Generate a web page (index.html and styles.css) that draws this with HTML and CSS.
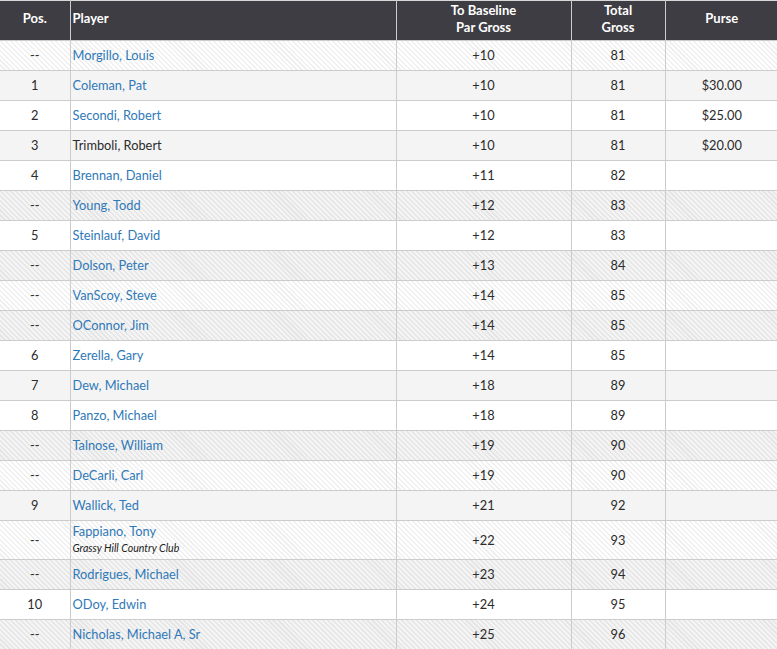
FILE: index.html
```html
<!DOCTYPE html>
<html>
<head>
<meta charset="utf-8">
<link rel="stylesheet" href="styles.css">
</head>
<body>
<table class="board">
  <colgroup>
    <col class="c-pos"><col class="c-player"><col class="c-par"><col class="c-total"><col class="c-purse">
  </colgroup>
  <thead>
    <tr>
      <th>Pos.</th>
      <th class="left">Player</th>
      <th>To Baseline<br>Par Gross</th>
      <th>Total<br>Gross</th>
      <th>Purse</th>
    </tr>
  </thead>
  <tbody>
    <tr class="odd0 na"><td>--</td><td class="left"><a>Morgillo, Louis</a></td><td>+10</td><td>81</td><td></td></tr>
    <tr class="odd1"><td>1</td><td class="left"><a>Coleman, Pat</a></td><td>+10</td><td>81</td><td>$30.00</td></tr>
    <tr class="odd0"><td>2</td><td class="left"><a>Secondi, Robert</a></td><td>+10</td><td>81</td><td>$25.00</td></tr>
    <tr class="odd1"><td>3</td><td class="left">Trimboli, Robert</td><td>+10</td><td>81</td><td>$20.00</td></tr>
    <tr class="odd0"><td>4</td><td class="left"><a>Brennan, Daniel</a></td><td>+11</td><td>82</td><td></td></tr>
    <tr class="odd1 na"><td>--</td><td class="left"><a>Young, Todd</a></td><td>+12</td><td>83</td><td></td></tr>
    <tr class="odd0"><td>5</td><td class="left"><a>Steinlauf, David</a></td><td>+12</td><td>83</td><td></td></tr>
    <tr class="odd1 na"><td>--</td><td class="left"><a>Dolson, Peter</a></td><td>+13</td><td>84</td><td></td></tr>
    <tr class="odd0 na"><td>--</td><td class="left"><a>VanScoy, Steve</a></td><td>+14</td><td>85</td><td></td></tr>
    <tr class="odd1 na"><td>--</td><td class="left"><a>OConnor, Jim</a></td><td>+14</td><td>85</td><td></td></tr>
    <tr class="odd0"><td>6</td><td class="left"><a>Zerella, Gary</a></td><td>+14</td><td>85</td><td></td></tr>
    <tr class="odd1"><td>7</td><td class="left"><a>Dew, Michael</a></td><td>+18</td><td>89</td><td></td></tr>
    <tr class="odd0"><td>8</td><td class="left"><a>Panzo, Michael</a></td><td>+18</td><td>89</td><td></td></tr>
    <tr class="odd1 na"><td>--</td><td class="left"><a>Talnose, William</a></td><td>+19</td><td>90</td><td></td></tr>
    <tr class="odd0 na"><td>--</td><td class="left"><a>DeCarli, Carl</a></td><td>+19</td><td>90</td><td></td></tr>
    <tr class="odd1"><td>9</td><td class="left"><a>Wallick, Ted</a></td><td>+21</td><td>92</td><td></td></tr>
    <tr class="odd0 na tall"><td>--</td><td class="left"><a>Fappiano, Tony</a><div class="club">Grassy Hill Country Club</div></td><td>+22</td><td>93</td><td></td></tr>
    <tr class="odd1 na"><td>--</td><td class="left"><a>Rodrigues, Michael</a></td><td>+23</td><td>94</td><td></td></tr>
    <tr class="odd0"><td>10</td><td class="left"><a>ODoy, Edwin</a></td><td>+24</td><td>95</td><td></td></tr>
    <tr class="odd1 na"><td>--</td><td class="left"><a>Nicholas, Michael A, Sr</a></td><td>+25</td><td>96</td><td></td></tr>
  </tbody>
</table>
</body>
</html>
```

FILE: styles.css
```css
html, body {
  margin: 0;
  padding: 0;
  background: #fff;
}
body {
  font-family: Lato, "Liberation Sans", sans-serif;
  font-size: 12.8px;
  color: #2b2b2b;
}
.board {
  border-collapse: collapse;
  width: 778px;
  table-layout: fixed;
}
.c-pos { width: 70px; }
.c-player { width: 326px; }
.c-par { width: 175px; }
.c-total { width: 94px; }
.c-purse { width: 113px; }
.board th {
  background: #3e3d43;
  color: #fff;
  font-weight: 700;
  font-size: 13px;
  line-height: 17px;
  height: 35px;
  padding: 0 2px 4px;
  text-align: center;
  vertical-align: middle;
  border: 1px solid #ccc;
  border-top: 1px solid #d8d8d8;
  border-bottom: 0;
}
.board td {
  height: 28px;
  padding: 0 2px 1px;
  text-align: center;
  vertical-align: middle;
  border: 1px solid #ccc;
  line-height: 17px;
}
.board th:first-child, .board td:first-child { border-left: 0; }
.board th:last-child, .board td:last-child { border-right: 0; }
.board .left { text-align: left; }
.board a { color: #3079b8; text-decoration: none; }
.odd0 { background-color: #fff; }
.odd1 { background-color: #f4f4f4; }
.na {
  background-image: repeating-linear-gradient(45deg, rgba(0,0,0,0.06) 0 1.5px, rgba(0,0,0,0) 1.5px 3.5px);
}
.board .tall td { height: 34px; padding-top: 2px; padding-bottom: 2px; }
.club {
  font-size: 10.6px;
  font-style: italic;
  color: #222;
  line-height: 17px;
}
```
